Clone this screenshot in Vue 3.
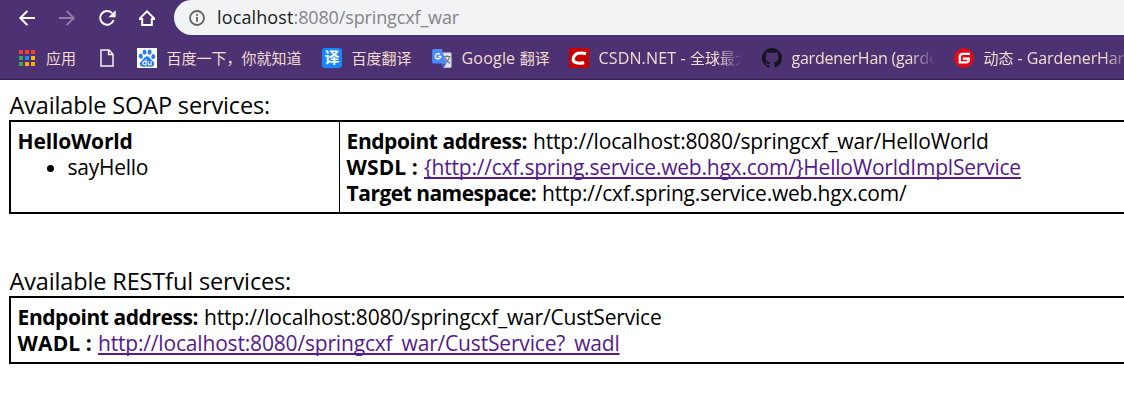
<script setup>
const appColors = ['#ea4335', '#ea4335', '#ea4335', '#34a853', '#1a8cff', '#fbbc05', '#34a853', '#fbaa05', '#fbaa05']
</script>

<template>
  <div class="window">
    <header class="chrome">
      <div class="toolbar">
        <svg class="nav" viewBox="0 0 16 16"><path d="M16 8H1.6M8.4 .9L1.3 8l7.1 7.1" /></svg>
        <svg class="nav dim" viewBox="0 0 16 16"><path d="M0 8h14.400M7.600 .9L14.700 8l-7.100 7.100" /></svg>
        <svg class="nav" viewBox="0 0 16 16"><path d="M13.100 3.100A6.900 6.900 0 1 0 14.600 10.200" /><path class="solid" d="M16.600 .2v7H9.400z" /></svg>
        <svg class="nav" viewBox="0 0 16 16"><path d="M.4 8.900L8 1.400l7.600 7.500M0 8.900h3.200v6.200h9.600V8.900H16" /></svg>
        <div class="omnibox">
          <svg class="info" viewBox="0 0 16 16"><circle cx="8" cy="8" r="7" /><path d="M8 7v4.800M8 4v1.800" /></svg>
          <span class="host">localhost</span><span class="path">:8080/springcxf_war</span>
        </div>
      </div>
      <nav class="bookmarks">
        <a class="mark apps">
          <span class="grid"><i v-for="(c, i) in appColors" :key="i" :style="{ background: c }"></i></span>
          <span>应用</span>
        </a>
        <svg class="page-icon" viewBox="0 0 14 18"><path d="M1 1h8l4 4.200V17H1zM8.600 1v4.600H13" /></svg>
        <a class="mark baidu">
          <svg class="ico" viewBox="0 0 20 20">
            <rect width="20" height="20" fill="#fff" />
            <g fill="#2b7de9">
              <ellipse cx="3.800" cy="8.200" rx="2" ry="2.600" transform="rotate(-12 3.800 8.200)" />
              <ellipse cx="7.600" cy="4.100" rx="2" ry="2.700" />
              <ellipse cx="12.600" cy="4.100" rx="2" ry="2.700" transform="rotate(8 12.600 4.100)" />
              <ellipse cx="16.300" cy="8.600" rx="2" ry="2.500" transform="rotate(10 16.300 8.600)" />
              <path d="M10 8.200c2.200 0 2.700 2 4.300 3.500 1.800 1.600 3.200 2.500 2.800 4.700-.4 2.200-2.300 2.600-4.200 2.300-2-.3-3.500-.3-5.400 0-2 .3-4.200-.1-4.600-2.400-.3-2 1-3 2.600-4.400C7.200 10.500 7.800 8.200 10 8.200z" />
            </g>
            <path d="M9 11.300v5.400H7.500a1.600 1.600 0 0 1 0-3.300H9M11.200 13.200v2.500q0 1 1 1h1.900v-3.500" fill="none" stroke="#fff" stroke-width="1.100" />
          </svg>
          <span>百度一下，你就知道</span>
        </a>
        <a class="mark fanyi">
          <span class="ico yi">译</span>
          <span>百度翻译</span>
        </a>
        <a class="mark google">
          <svg class="ico" viewBox="0 0 20 20">
            <path d="M7 4.500h11.200a1.300 1.300 0 0 1 1.300 1.300v12.700a1.300 1.300 0 0 1-1.300 1.300H11.500z" fill="#dfe1e5" />
            <path d="M11.500 8.500h7M15 7v1.500M17.500 8.500c-.5 3.200-2.500 5.500-5 7M13 9.500c.8 2.500 2.500 4.500 5 6" fill="none" stroke="#687783" stroke-width="1.100" />
            <path d="M1.600 1h8.200l4.700 14.500H1.600A1.400 1.400 0 0 1 .2 14.100V2.400A1.400 1.400 0 0 1 1.600 1z" fill="#4c8bf5" />
            <path d="M9.300 15.500h5.200l-3 4.300z" fill="#3367d6" />
            <path d="M8 6.300A2.700 2.700 0 1 0 8.800 8.500H6.200" fill="none" stroke="#fff" stroke-width="1.300" />
          </svg>
          <span><span class="w-google">Google </span>翻译</span>
        </a>
        <a class="mark csdn">
          <svg class="ico" viewBox="0 0 20 20"><rect width="20" height="20" fill="#c90000" /><path d="M17 5.600c-3.500-.7-7.700-.9-10 .6-2.600 1.800-3.800 5.700-1.800 7.600 1.900 1.600 6.500 1.600 10 .8" fill="none" stroke="#fff" stroke-width="3.200" /></svg>
          <span class="fade"><span class="w-csdn">CSDN.NET - </span>全球最大</span>
        </a>
        <a class="mark github">
          <svg class="ico" viewBox="0 0 16 16"><path fill="#17131f" d="M8 0C3.580 0 0 3.580 0 8c0 3.540 2.290 6.530 5.470 7.590.4.070.55-.17.55-.38 0-.19-.01-.82-.01-1.490-2.010.37-2.530-.49-2.690-.94-.09-.23-.48-.94-.82-1.130-.28-.15-.68-.52-.01-.53.63-.01 1.080.58 1.230.82.72 1.210 1.870.87 2.330.66.070-.52.28-.87.51-1.070-1.780-.2-3.640-.89-3.640-3.950 0-.87.31-1.590.82-2.150-.08-.2-.36-1.020.08-2.120 0 0 .67-.21 2.200.82.64-.18 1.320-.27 2-.27s1.360.09 2 .27c1.530-1.040 2.200-.82 2.200-.82.44 1.100.16 1.920.08 2.120.51.56.82 1.270.82 2.150 0 3.070-1.870 3.750-3.650 3.950.29.25.54.73.54 1.480 0 1.070-.01 1.930-.01 2.200 0 .21.15.46.55.38A8.010 8.010 0 0 0 16 8c0-4.420-3.580-8-8-8z" /></svg>
          <span class="fade w-github">gardenerHan (garde</span>
        </a>
        <a class="mark gitee">
          <svg class="ico" viewBox="0 0 20 20"><circle cx="10" cy="10" r="10" fill="#e00b1a" /><path d="M16 5.800H8.500a2.700 2.700 0 0 0-2.700 2.700v5.800h6.300a2.600 2.600 0 0 0 2.600-2.600v-1H8.800" fill="none" stroke="#fff" stroke-width="2.300" /></svg>
          <span class="fade">动态<span class="w-gitee"> - GardenerHan</span></span>
        </a>
      </nav>
    </header>

    <main class="content">
      <h2 class="title soap">Available SOAP services:</h2>
      <section class="table">
        <div class="cell names">
          <b class="t-hello">HelloWorld</b>
          <ul><li>sayHello</li></ul>
        </div>
        <div class="cell details">
          <p><b class="t-end">Endpoint address:</b><span class="t-u1">http://localhost:8080/springcxf_war/HelloWorld</span></p>
          <p><b class="t-wsdl">WSDL :</b><a class="t-u2">{http://cxf.spring.service.web.hgx.com/}HelloWorldImplService</a></p>
          <p><b class="t-target">Target namespace:</b><span class="t-u3">http://cxf.spring.service.web.hgx.com/</span></p>
        </div>
      </section>
      <h2 class="title rest">Available RESTful services:</h2>
      <section class="table">
        <div class="cell details">
          <p><b class="t-end">Endpoint address:</b><span class="t-u4">http://localhost:8080/springcxf_war/CustService</span></p>
          <p><b class="t-wadl">WADL :</b><a class="t-u5">http://localhost:8080/springcxf_war/CustService?_wadl</a></p>
        </div>
      </section>
    </main>
  </div>
</template>

<style>
body { background: #fff; overflow: hidden; }
</style>

<style scoped>
.window { width: 1124px; height: 413px; overflow: hidden; box-sizing: border-box; font-family: "Open Sans", "Noto Sans CJK SC", sans-serif; color: #000; background: #fff; }
.chrome { height: 80px; box-sizing: border-box; background: #4d3273; border-bottom: 1px solid #351d55; overflow: hidden; }
.toolbar { display: flex; height: 35px; padding-left: 19px; }
.nav { width: 16px; height: 16px; margin: 10px 24px 0 0; overflow: visible; fill: none; stroke: #fff; stroke-width: 2; flex: none; }
.nav .solid { fill: #fff; stroke: none; }
.nav.dim { stroke: #8f7ca9; }
.omnibox { display: flex; align-items: center; width: 1000px; height: 35px; margin-left: -5px; flex: none; box-sizing: border-box; padding-left: 15px; border-radius: 18px; background: #f1f3f4; font-size: 18px; line-height: 35px; white-space: pre; }
.info { width: 16px; height: 16px; margin-right: 12px; fill: none; stroke: #5f6368; stroke-width: 1.8; }
.host { color: #202124; letter-spacing: .13px; }
.path { color: #80868b; letter-spacing: -.14px; }
.bookmarks { display: flex; align-items: center; height: 46px; padding-left: 19px; color: #f3dcd0; font-size: 15px; white-space: pre; }
.mark { display: flex; align-items: center; flex: none; line-height: 24px; }
.grid { display: grid; grid-template-columns: repeat(3, 4px); grid-auto-rows: 4px; gap: 2px; margin-right: 11px; }
.page-icon { width: 14px; height: 18px; margin: 0 23px 0 24px; flex: none; fill: none; stroke: #f5eef5; stroke-width: 1.5; }
.ico { width: 20px; height: 20px; margin-right: 9.5px; flex: none; }
.baidu { width: 185px; }
.fanyi { width: 110px; }
.google { width: 137px; }
.csdn { width: 193px; }
.github { width: 192px; }
.yi { border-radius: 3px; background: #1787fb; color: #fff; font-size: 15px; font-weight: 700; line-height: 19px; text-align: center; }
.fade { width: 143px; overflow: hidden; -webkit-mask-image: linear-gradient(90deg, #000 118px, transparent 143px); mask-image: linear-gradient(90deg, #000 118px, transparent 143px); }
.gitee .fade { width: 160px; -webkit-mask-image: linear-gradient(90deg, #000 120px, transparent 148px); mask-image: linear-gradient(90deg, #000 120px, transparent 148px); }
.w-google { font-size: 16px; letter-spacing: .2px; }
.w-csdn { font-size: 16px; letter-spacing: .15px; }
.w-github { font-size: 16px; letter-spacing: -.24px; }
.w-gitee { font-size: 16px; letter-spacing: -.1px; }
.content { padding: 10px 0 0 9px; }
.title { margin: 0; height: 30px; padding-left: .5px; font-size: 23.5px; font-weight: 400; line-height: 30px; letter-spacing: -.14px; white-space: pre; }
.rest { margin-top: 52px; }
.table { display: flex; width: 1200px; box-sizing: border-box; border: 2px solid #000; font-size: 21px; line-height: 26px; white-space: pre; }
.cell { padding: 6px 6px 6px 6.6px; }
.names { width: 329px; box-sizing: border-box; border-right: 1px solid #000; }
p { margin: 0; height: 26px; }
ul { margin: 0; padding-left: 50px; }
li { letter-spacing: -.27px; }
b { margin-right: 6px; font-weight: 700; }
.details a { color: #551a8b; text-decoration: underline; text-decoration-thickness: 1.5px; text-underline-offset: 1.5px; text-decoration-skip-ink: none; }
.t-hello { letter-spacing: -.18px; }
.t-end { letter-spacing: -.45px; }
.t-u1 { letter-spacing: -.15px; }
.t-wsdl { letter-spacing: .1px; }
.t-u2 { letter-spacing: -.219px; }
.t-target { letter-spacing: -.52px; }
.t-u3 { letter-spacing: -.21px; }
.t-u4 { letter-spacing: -.19px; }
.t-wadl { letter-spacing: .12px; }
.t-u5 { letter-spacing: -.175px; }
</style>
